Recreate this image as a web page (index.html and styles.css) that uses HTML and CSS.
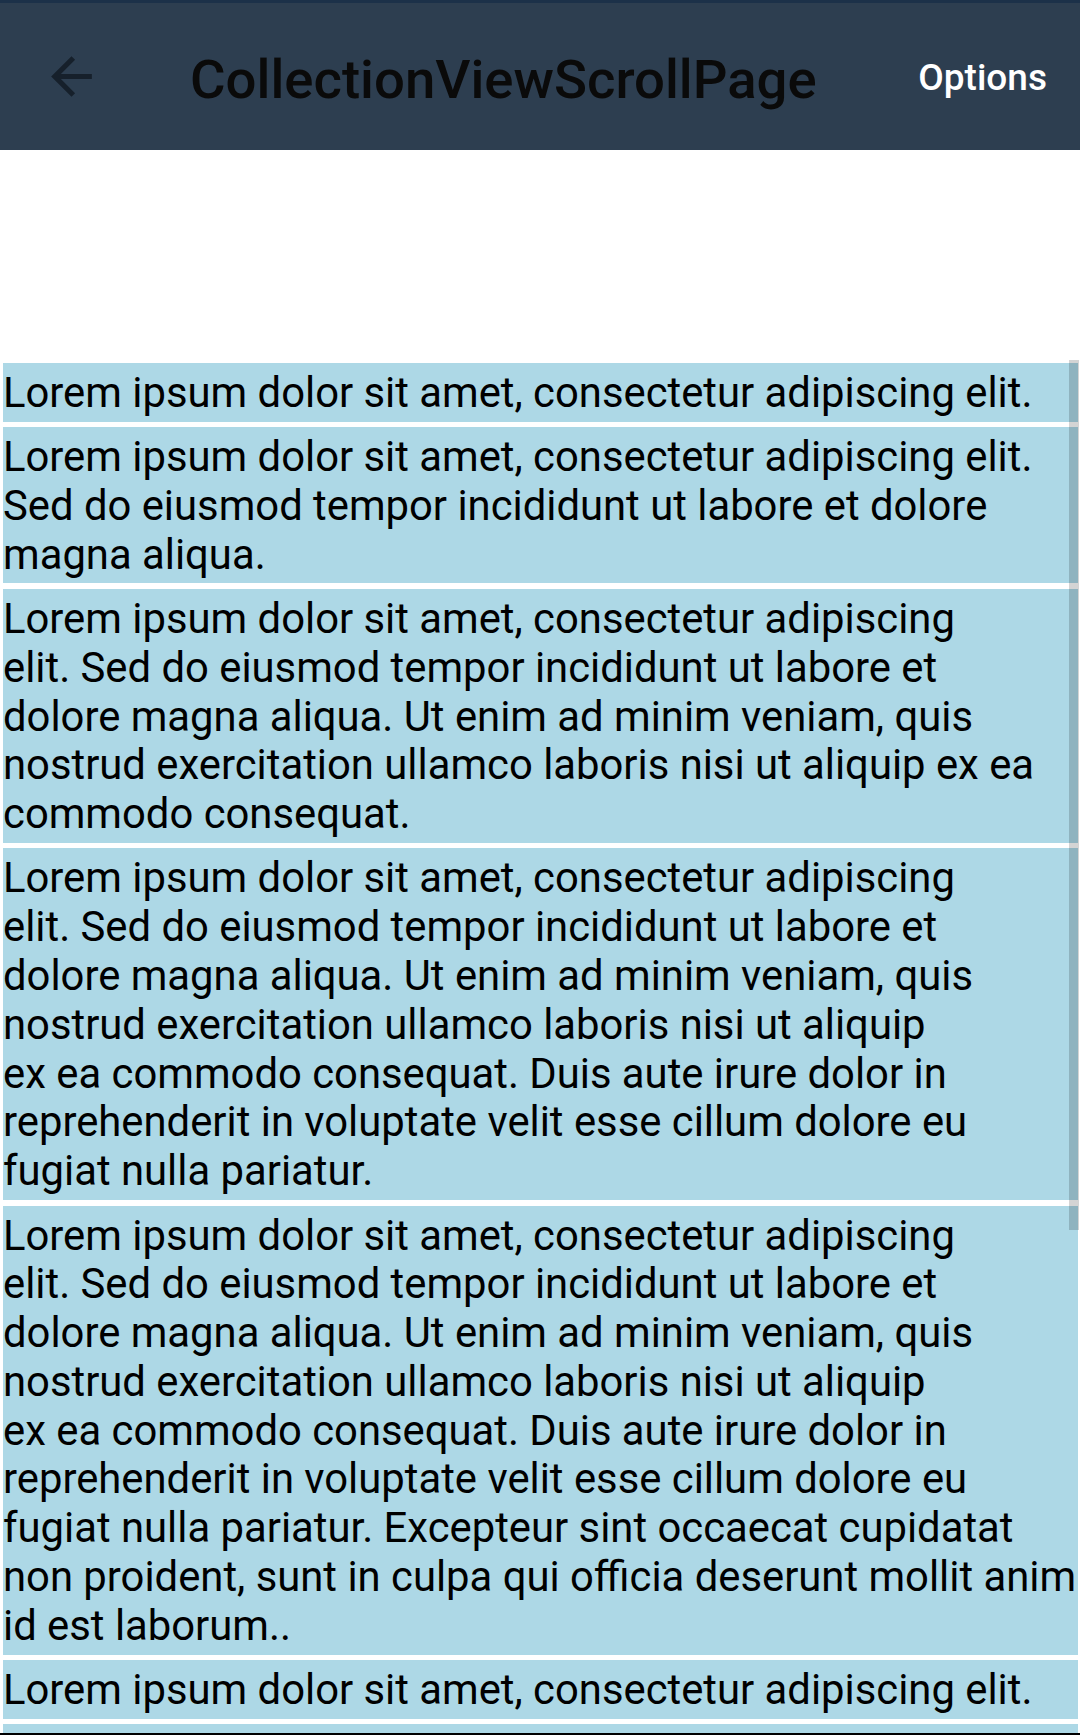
FILE: index.html
```html
<!DOCTYPE html>
<html>
<head>
<meta charset="utf-8">
<link rel="stylesheet" href="styles.css">
</head>
<body>
<div class="app">
  <div class="status-strip"></div>
  <header class="toolbar">
    <svg class="back" viewBox="0 0 24 24" width="61" height="61"><path d="M20 11H7.83l5.59-5.59L12 4l-8 8 8 8 1.41-1.41L7.83 13H20v-2z"/></svg>
    <div class="title">CollectionViewScrollPage</div>
    <div class="options">Options</div>
  </header>
  <div class="spacer"></div>
  <div class="list">
    <div class="item">Lorem ipsum dolor sit amet, consectetur adipiscing elit.</div>
    <div class="item">Lorem ipsum dolor sit amet, consectetur adipiscing elit.<br>Sed do eiusmod tempor incididunt ut labore et dolore<br>magna aliqua.</div>
    <div class="item">Lorem ipsum dolor sit amet, consectetur adipiscing<br>elit. Sed do eiusmod tempor incididunt ut labore et<br>dolore magna aliqua. Ut enim ad minim veniam, quis<br>nostrud exercitation ullamco laboris nisi ut aliquip ex ea<br>commodo consequat.</div>
    <div class="item">Lorem ipsum dolor sit amet, consectetur adipiscing<br>elit. Sed do eiusmod tempor incididunt ut labore et<br>dolore magna aliqua. Ut enim ad minim veniam, quis<br>nostrud exercitation ullamco laboris nisi ut aliquip<br>ex ea commodo consequat. Duis aute irure dolor in<br>reprehenderit in voluptate velit esse cillum dolore eu<br>fugiat nulla pariatur.</div>
    <div class="item">Lorem ipsum dolor sit amet, consectetur adipiscing<br>elit. Sed do eiusmod tempor incididunt ut labore et<br>dolore magna aliqua. Ut enim ad minim veniam, quis<br>nostrud exercitation ullamco laboris nisi ut aliquip<br>ex ea commodo consequat. Duis aute irure dolor in<br>reprehenderit in voluptate velit esse cillum dolore eu<br>fugiat nulla pariatur. Excepteur sint occaecat cupidatat<br>non proident, sunt in culpa qui officia deserunt mollit anim<br>id est laborum..</div>
    <div class="item">Lorem ipsum dolor sit amet, consectetur adipiscing elit.</div>
    <div class="item">Lorem ipsum dolor sit amet, consectetur adipiscing elit.</div>
    <div class="scroll-thumb"></div>
  </div>
  <div class="nav-edge"></div>
</div>
</body>
</html>
```
FILE: styles.css
```css
html, body {
  margin: 0;
  padding: 0;
  background: #ffffff;
}

.app {
  width: 1080px;
  height: 1735px;
  overflow: hidden;
  display: flex;
  flex-direction: column;
  font-family: Roboto, "Noto Sans", sans-serif;
}

.status-strip {
  height: 3px;
  background: #1c3149;
  flex: none;
}

.toolbar {
  height: 147px;
  flex: none;
  background: #2d3e50;
  display: flex;
  align-items: center;
  position: relative;
}

.back {
  fill: #16202b;
  margin-left: 41px;
  flex: none;
}

.title {
  margin-left: 88px;
  font-size: 54.5px;
  font-weight: 500;
  color: #0a0a0a;
  margin-top: 4px;
  white-space: nowrap;
}

.options {
  margin-left: auto;
  margin-right: 33px;
  font-size: 37px;
  font-weight: 500;
  color: #ffffff;
  margin-top: 1px;
}

.spacer {
  height: 210px;
  flex: none;
}

.list {
  flex: 1;
  position: relative;
  overflow: hidden;
  padding: 0 2px 0 3px;
}

.item {
  background: #add8e6;
  color: #000000;
  font-size: 41.8px;
  line-height: 48.8px;
  padding: 6px 0 4px 0;
  margin: 2.75px 0 5.5px 0;
  white-space: nowrap;
}

.item + .item {
  margin-top: 0;
}

.scroll-thumb {
  position: absolute;
  top: 0;
  right: 1px;
  width: 10px;
  height: 870px;
  background: rgba(0, 0, 0, 0.17);
}

.nav-edge {
  height: 2px;
  flex: none;
  background: #000000;
}
```
